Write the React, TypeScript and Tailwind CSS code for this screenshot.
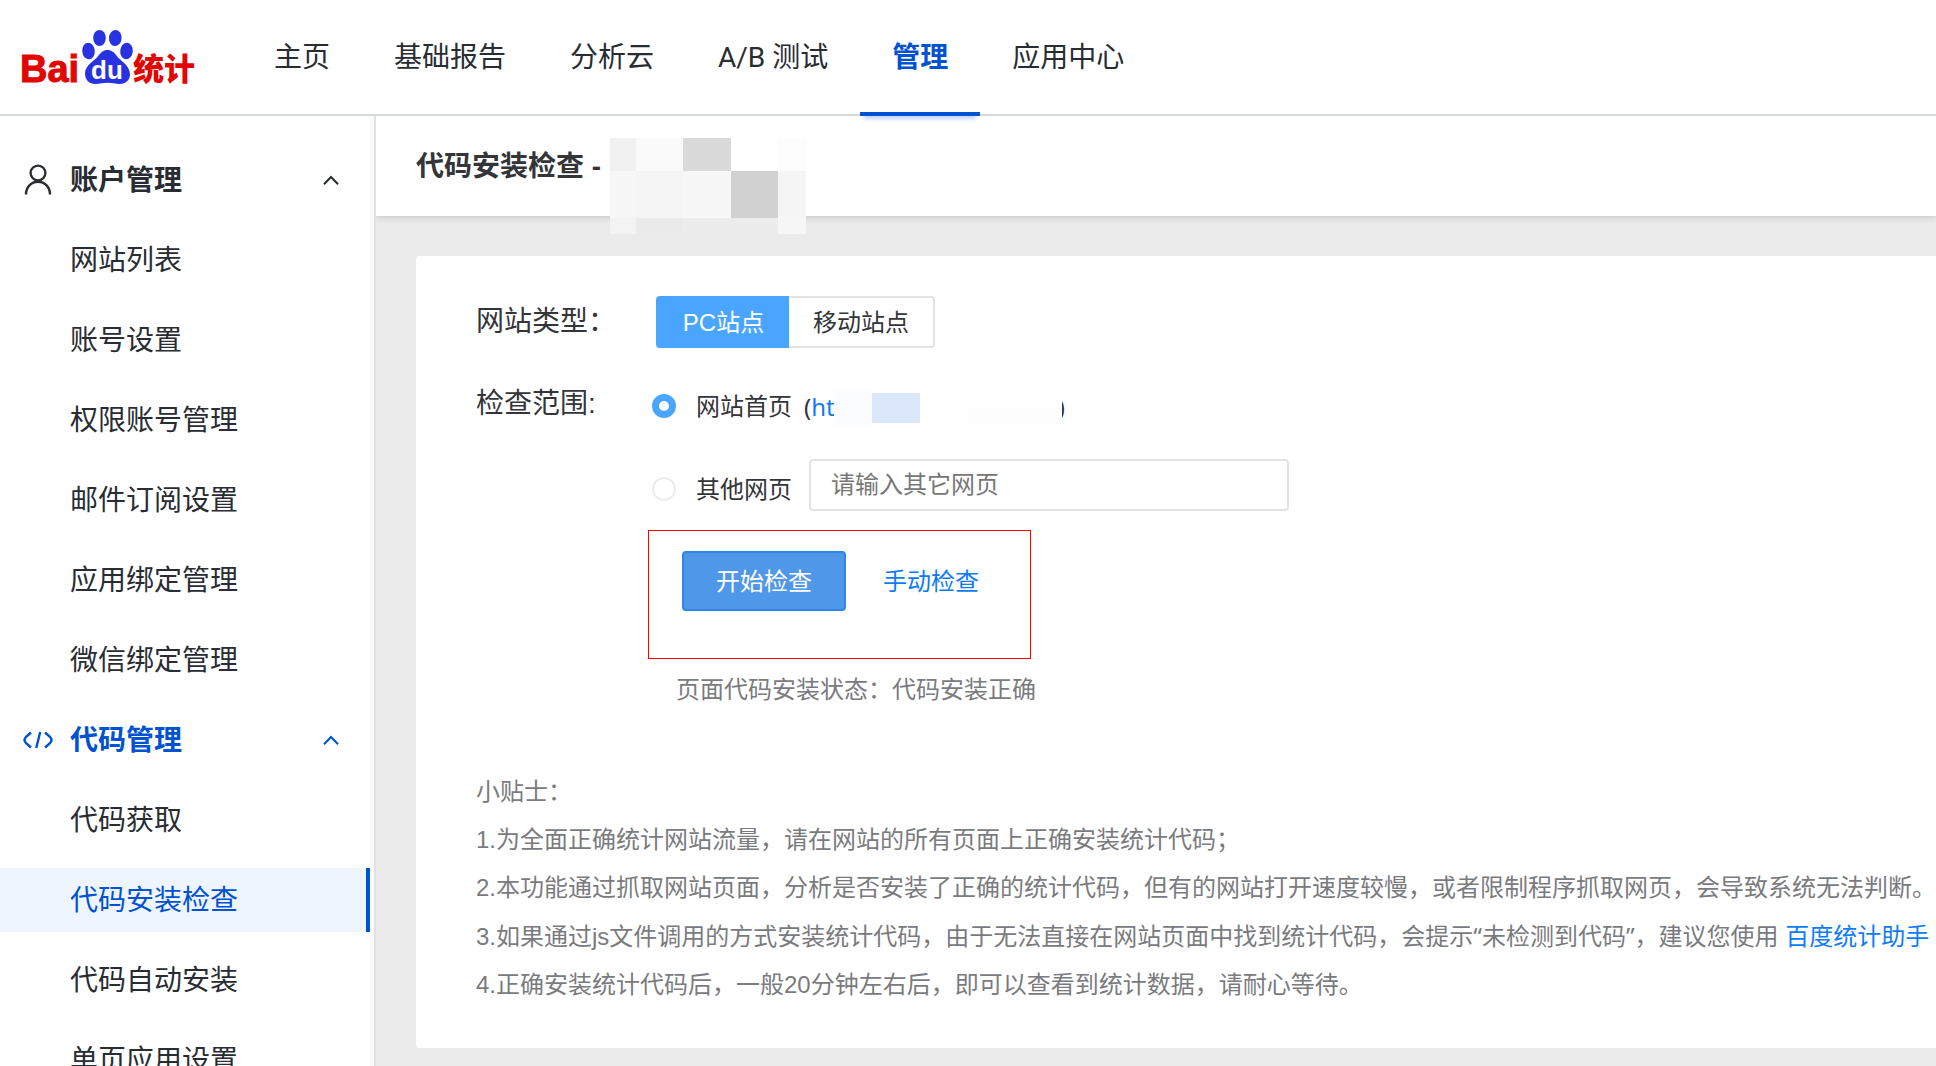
import { useState } from "react";

const NAV = ["主页", "基础报告", "分析云", "A/B 测试", "管理", "应用中心"];

const ACCOUNT_ITEMS = ["网站列表", "账号设置", "权限账号管理", "邮件订阅设置", "应用绑定管理", "微信绑定管理"];
const CODE_ITEMS = ["代码获取", "代码安装检查", "代码自动安装", "单页应用设置"];

function Logo() {
  return (
    <svg width="176" height="64" viewBox="20 26 176 64" role="img" aria-label="Baidu 统计">
      <g fill="#2932e1">
        <ellipse cx="88.5" cy="51" rx="6.3" ry="8.2" transform="rotate(-5 88.5 51)" />
        <ellipse cx="99.5" cy="38" rx="6.3" ry="8.1" />
        <ellipse cx="115.3" cy="38" rx="6.3" ry="8.1" transform="rotate(4 115.3 38)" />
        <ellipse cx="126.5" cy="51" rx="6.3" ry="8.2" transform="rotate(5 126.5 51)" />
        <path d="M107.500 50c4 0 7 2.500 9.500 6.200 3 4.300 13 8.800 13 18.300 0 5.500-4.500 9.500-10 9.500-5 0-8-1.200-12.500-1.200S100 84 95 84c-5.500 0-10-4-10-10.500 0-8.500 9.500-12.500 13-17.300 2.700-3.700 5.500-6.200 9.500-6.200z" />
      </g>
      <g fontWeight="700">
        <text x="20" y="82" fontSize="38" fill="#e10602" stroke="#e10602" strokeWidth="1" fontFamily="Liberation Sans, sans-serif">Bai</text>
        <text x="91" y="79" fontSize="26" fill="#ffffff" fontFamily="Liberation Sans, sans-serif">du</text>
        <text x="133" y="80" fontSize="31" fontWeight="900" fill="#e10602" fontFamily="Noto Sans CJK SC, sans-serif">统计</text>
      </g>
    </svg>
  );
}

function UserIcon() {
  return (
    <svg width="28" height="32" viewBox="0 0 28 32" fill="none" stroke="currentColor" strokeWidth="2.400">
      <circle cx="14" cy="9" r="7.400" />
      <path d="M2 30.500C2 23 7.200 17.800 14 17.800S26 23 26 30.500" />
    </svg>
  );
}

function CodeIcon() {
  return (
    <svg width="32" height="18" viewBox="0 0 32 18" fill="none" stroke="currentColor" strokeWidth="2.400">
      <path d="M9 1.500 3.800 6.200Q1.200 9 3.800 11.800L9 16.500M23 1.500l5.200 4.700q2.600 2.800 0 5.600L23 16.500M18.200 1 14.200 17" />
    </svg>
  );
}

function Chevron({ open }: { open: boolean }) {
  return (
    <svg width="16" height="10" viewBox="0 0 16 10" className={open ? "" : "rotate-180"} fill="none" stroke="currentColor" strokeWidth="2">
      <path d="M1 9.200 8 2l7 7.200" />
    </svg>
  );
}

type SectionProps = { title: string; icon: React.ReactNode; items: string[]; active?: string };

function Section({ title, icon, items, active }: SectionProps) {
  const [open, setOpen] = useState(true);
  return (
    <section className="flex flex-col gap-4">
      <button
        type="button"
        aria-expanded={open}
        onClick={() => setOpen(!open)}
        className={`flex h-16 shrink-0 cursor-pointer items-center pr-[31px] pl-[22px] text-[28px] font-bold ${active ? "text-[#0052d1]" : "text-[#282c33]"}`}
      >
        <span className="flex w-12 items-center justify-start">
          <span className="flex w-8 justify-center">{icon}</span>
        </span>
        <span className="flex-1 pt-0.5 text-left">{title}</span>
        <Chevron open={open} />
      </button>
      {open &&
        items.map((item) => (
          <a
            key={item}
            href="#"
            aria-current={item === active ? "page" : undefined}
            className={`flex h-16 shrink-0 items-center border-r-4 pt-0.5 pl-[70px] text-[28px] ${
              item === active ? "border-[#0052d1] bg-[#eef5ff] text-[#0052d1]" : "border-transparent text-[#282c33]"
            }`}
          >
            {item}
          </a>
        ))}
    </section>
  );
}

function TitleMask() {
  return (
    <span aria-hidden="true" className="absolute top-[22px] left-[234px] grid grid-cols-[26px_47px_48px_47px_28px] grid-rows-[33px_47px_16px]">
      <i className="bg-[#f1f1f1]" />
      <i className="bg-[#fafafa]" />
      <i className="bg-[#dadada]" />
      <i className="bg-white" />
      <i className="bg-[#fdfdfd]" />
      <i className="bg-[#f7f7f7]" />
      <i className="bg-[#f5f5f5]" />
      <i className="bg-[#f7f7f7]" />
      <i className="bg-[#d1d1d1]" />
      <i className="bg-[#f5f5f5]" />
      <i className="bg-[#f3f3f3]" />
      <i className="bg-[#eaeaea]" />
      <i className="bg-[#ececec]" />
      <i className="bg-[#ececec]" />
      <i className="bg-[#f6f6f6]" />
    </span>
  );
}

const RADIO =
  "size-6 shrink-0 cursor-pointer appearance-none rounded-full border-2 border-[#ececec] bg-white checked:border-[7px] checked:border-[#4aa5ff]";

export default function App() {
  const [device, setDevice] = useState("pc");
  const [scope, setScope] = useState("home");

  return (
    <div lang="zh-CN" className="flex h-screen flex-col overflow-hidden bg-white font-['Liberation_Sans','Noto_Sans_CJK_SC',sans-serif] text-[#333539]">
      <header className="relative z-10 flex h-[116px] shrink-0 border-b-2 border-[#d3d9d8] pl-5">
        <a href="#" className="mt-[26px] mr-[46px] h-16 w-44 shrink-0">
          <Logo />
        </a>
        <nav className="flex h-[116px]">
          {NAV.map((item) => (
            <a
              key={item}
              href="#"
              className={`flex items-center border-b-4 px-8 pt-1 font-['Roboto','Noto_Sans_CJK_SC',sans-serif] text-[28px] whitespace-nowrap ${
                item === "管理"
                  ? "border-[#0052d1] font-bold text-[#0052d1] shadow-[0_7px_4px_-4px_#bfd4fa]"
                  : "border-transparent text-[#282c33]"
              }`}
            >
              {item}
            </a>
          ))}
        </nav>
      </header>

      <div className="flex min-h-0 flex-1">
        <aside className="w-[376px] shrink-0 overflow-hidden border-r-2 border-[#e2e2e2] bg-[#fafafa] pr-1">
          <div className="flex min-h-full flex-col gap-4 bg-white pt-8">
            <Section title="账户管理" icon={<UserIcon />} items={ACCOUNT_ITEMS} />
            <Section title="代码管理" icon={<CodeIcon />} items={CODE_ITEMS} active="代码安装检查" />
          </div>
        </aside>

        <main className="min-w-0 flex-1 overflow-hidden bg-[#ebebeb]">
          <div className="relative flex h-[100px] items-center bg-white pl-10 shadow-[0_2px_6px_#00000022]">
            <h1 className="pt-0.5 text-[28px] font-bold">代码安装检查 -</h1>
            <TitleMask />
          </div>

          <div className="mt-10 ml-10 rounded-l bg-white px-[60px] pt-10 pb-10">
            <form onSubmit={(e) => e.preventDefault()} className="text-2xl">
              <div className="flex items-center">
                <span className="w-[180px] text-[28px] leading-[48px]">网站类型：</span>
                <div role="group" aria-label="网站类型" className="flex">
                  <button
                    type="button"
                    aria-pressed={device === "pc"}
                    onClick={() => setDevice("pc")}
                    className="h-[52px] w-[133px] rounded-l border-2 border-r-0 border-[#e3e3e3] pt-0.5 aria-pressed:border-[#4aa5ff] aria-pressed:bg-[#4aa5ff] aria-pressed:text-white"
                  >
                    PC站点
                  </button>
                  <button
                    type="button"
                    aria-pressed={device === "mobile"}
                    onClick={() => setDevice("mobile")}
                    className="h-[52px] w-[146px] rounded-r border-2 border-l-0 border-[#e3e3e3] pt-0.5 aria-pressed:border-[#4aa5ff] aria-pressed:bg-[#4aa5ff] aria-pressed:text-white"
                  >
                    移动站点
                  </button>
                </div>
              </div>

              <div className="mt-[30px] flex">
                <span className="w-[176px] text-[28px] leading-[52px]">检查范围:</span>
                <div>
                  <div className="flex h-14 items-center">
                    <input id="scope-home" type="radio" name="scope" checked={scope === "home"} onChange={() => setScope("home")} className={RADIO} />
                    <label htmlFor="scope-home" className="ml-5 pt-0.5">
                      网站首页
                    </label>
                    <span className="relative ml-3 flex w-[261px] justify-between pt-0.5 font-['Noto_Sans',sans-serif]">
                      <span>
                        (
                        <a href="#" className="text-[#0f7bf5]">
                          htt
                        </a>
                      </span>
                      <span>)</span>
                      <span aria-hidden="true" className="absolute top-0.5 left-[30px] grid h-[34px] grid-cols-[38px_48px_48px_94px] bg-white">
                        <i className="bg-[#fbfcff]" />
                        <i className="my-0.5 bg-[#dbe8fb]" />
                        <i />
                        <i className="mt-4 bg-[#fdfdfd]" />
                      </span>
                    </span>
                  </div>
                  <div className="mt-[25px] flex items-center">
                    <span className="flex items-center pt-2">
                      <input id="scope-other" type="radio" name="scope" checked={scope === "other"} onChange={() => setScope("other")} className={RADIO} />
                      <label htmlFor="scope-other" className="ml-5 pt-0.5">
                        其他网页
                      </label>
                    </span>
                    <input
                      type="text"
                      aria-label="其它网页"
                      placeholder="请输入其它网页"
                      className="ml-[17px] h-[52px] w-[480px] rounded border-2 border-[#e3e3e3] px-5 outline-none placeholder:text-[#777777] focus:border-[#4aa5ff]"
                    />
                  </div>
                </div>
              </div>

              <div className="mt-[19px] ml-[172px] flex h-[129px] w-[383px] items-start border border-[#ff0000] pt-5 pl-[33px]">
                <button type="submit" className="h-[60px] w-[164px] rounded border-2 border-[#2f86e8] bg-[#4f97e8] pt-0.5 text-white">
                  开始检查
                </button>
                <a href="#" className="ml-[37px] pt-px leading-[60px] text-[#0f7bf5]">
                  手动检查
                </a>
              </div>
              <p className="mt-[13px] ml-[200px] leading-9 text-[#7a7b7e]">页面代码安装状态：代码安装正确</p>
            </form>

            <div className="-mb-px mt-[60px] text-2xl leading-[48px] whitespace-nowrap text-[#7a7b7e]">
              <p>小贴士：</p>
              <p>1.为全面正确统计网站流量，请在网站的所有页面上正确安装统计代码；</p>
              <p>2.本功能通过抓取网站页面，分析是否安装了正确的统计代码，但有的网站打开速度较慢，或者限制程序抓取网页，会导致系统无法判断。</p>
              <p>
                3.如果通过js文件调用的方式安装统计代码，由于无法直接在网站页面中找到统计代码，会提示
                <span className="font-['Noto_Sans',sans-serif]">“</span>未检测到代码<span className="font-['Noto_Sans',sans-serif]">”</span>，建议您使用{" "}
                <a href="#" className="text-[#0f7bf5]">
                  百度统计助手
                </a>
              </p>
              <p>4.正确安装统计代码后，一般20分钟左右后，即可以查看到统计数据，请耐心等待。</p>
            </div>
          </div>
        </main>
      </div>
    </div>
  );
}
